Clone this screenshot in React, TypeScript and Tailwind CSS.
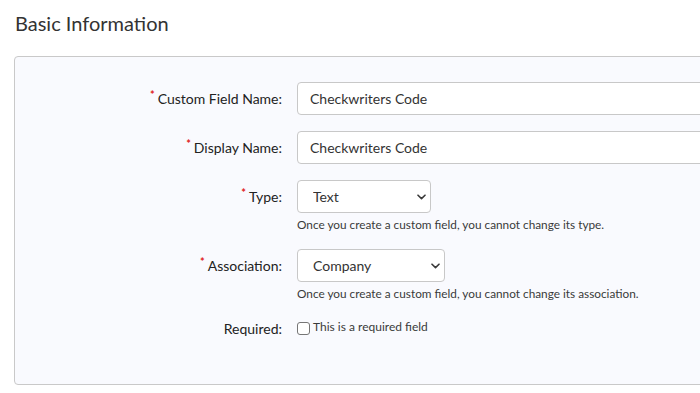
import React from "react";

const Chevron = () => (
  <svg width="9" height="6" viewBox="0 0 9 6" className="pointer-events-none absolute right-[5px] top-1/2 -translate-y-1/2">
    <path d="M1 1.2 L4.5 4.6 L8 1.2" fill="none" stroke="#3a3a3a" strokeWidth="1.6" strokeLinecap="round" strokeLinejoin="round" />
  </svg>
);

function Label({ text, required }: { text: string; required?: boolean }) {
  return (
    <div className="flex h-[33px] items-center justify-end text-[14px] text-[#222]">
      {required && <span className="mr-[3px] -translate-y-[3px] text-[11px] font-bold text-[#e02020]">*</span>}
      <span>{text}</span>
    </div>
  );
}

function Select({ value, width }: { value: string; width: string }) {
  return (
    <div className={`relative ${width}`}>
      <select
        defaultValue={value}
        className="h-[33px] w-full appearance-none rounded-[4px] border border-[#c8c8c8] bg-white pl-[15px] text-[14px] text-[#333] outline-none"
        style={{ fontFamily: "Lato, 'Noto Sans', sans-serif" }}
      >
        <option>{value}</option>
      </select>
      <Chevron />
    </div>
  );
}

export default function App() {
  return (
    <div
      className="h-[393px] w-[700px] overflow-hidden bg-white"
      style={{ fontFamily: "Lato, 'Noto Sans', sans-serif" }}
    >
      <h1 className="pl-[15px] pt-[10px] text-[20px] leading-[26px] text-[#333]">Basic Information</h1>
      <div className="ml-[14px] mt-[20px] h-[329px] w-[720px] rounded-[4px] border border-[#c9c9c9] bg-[#f9fafe] pt-[25px]">
        <div className="grid grid-cols-[267px_1fr] gap-x-[15px]">
          <Label text="Custom Field Name:" required />
          <div>
            <input
              defaultValue="Checkwriters Code"
              className="h-[33px] w-[420px] rounded-[4px] border border-[#c8c8c8] bg-white pl-[12px] text-[14px] text-[#333] outline-none"
              style={{ fontFamily: "Lato, 'Noto Sans', sans-serif" }}
            />
          </div>

          <div className="mt-[16px]"><Label text="Display Name:" required /></div>
          <div className="mt-[16px]">
            <input
              defaultValue="Checkwriters Code"
              className="h-[33px] w-[420px] rounded-[4px] border border-[#c8c8c8] bg-white pl-[12px] text-[14px] text-[#333] outline-none"
              style={{ fontFamily: "Lato, 'Noto Sans', sans-serif" }}
            />
          </div>

          <div className="mt-[16px]"><Label text="Type:" required /></div>
          <div className="mt-[16px]">
            <Select value="Text" width="w-[134px]" />
            <p className="mt-[3px] text-[11.8px] leading-[17px] text-[#3a3a3a]">
              Once you create a custom field, you cannot change its type.
            </p>
          </div>

          <div className="mt-[16px]"><Label text="Association:" required /></div>
          <div className="mt-[16px]">
            <Select value="Company" width="w-[148px]" />
            <p className="mt-[3px] text-[11.8px] leading-[17px] text-[#3a3a3a]">
              Once you create a custom field, you cannot change its association.
            </p>
          </div>

          <div className="mt-[16px] flex h-[20px] items-center justify-end text-[14px] text-[#222]">Required:</div>
          <div className="mt-[16px] flex h-[20px] items-center">
            <span className="inline-block h-[13px] w-[13px] rounded-[3px] border border-[#767676] bg-white" />
            <span className="ml-[3px] -translate-y-[1px] text-[12px] text-[#3a3a3a]">This is a required field</span>
          </div>
        </div>
      </div>
    </div>
  );
}
